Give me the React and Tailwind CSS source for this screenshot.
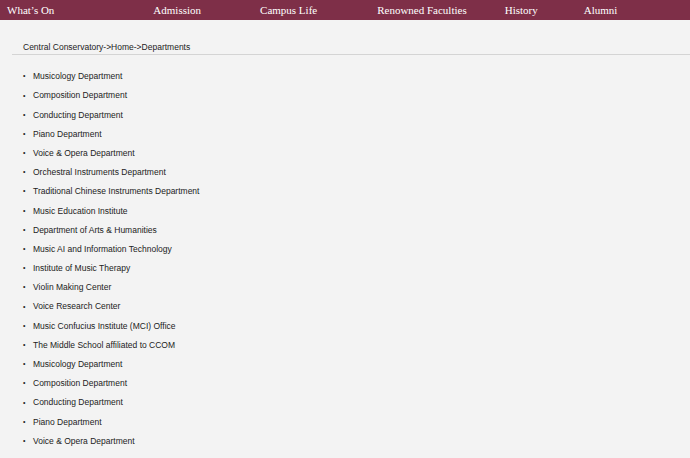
import React from 'react';

const nav = [
  ['What’s On', 'ml-[7px]'],
  ['Admission', 'ml-[99px]'],
  ['Campus Life', 'ml-[59px]'],
  ['Renowned Faculties', 'ml-[60px]'],
  ['History', 'ml-[38px]'],
  ['Alumni', 'ml-[46px]'],
];

const depts = [
  'Musicology Department',
  'Composition Department',
  'Conducting Department',
  'Piano Department',
  'Voice & Opera Department',
  'Orchestral Instruments Department',
  'Traditional Chinese Instruments Department',
  'Music Education Institute',
  'Department of Arts & Humanities',
  'Music AI and Information Technology',
  'Institute of Music Therapy',
  'Violin Making Center',
  'Voice Research Center',
  'Music Confucius Institute (MCI) Office',
  'The Middle School affiliated to CCOM',
  'Musicology Department',
  'Composition Department',
  'Conducting Department',
  'Piano Department',
  'Voice & Opera Department',
];

export default function App() {
  return (
    <div className="w-[690px] h-[458px] overflow-hidden bg-[#f3f3f3]">
      <div className="h-[20px] bg-[#7e2f48] flex items-center text-white text-[11px] font-[family-name:Liberation_Serif,serif]">
        {nav.map(([t, c]) => (
          <span key={t} className={c}>{t}</span>
        ))}
      </div>
      <div className="ml-[12px] mt-[21px] border-b border-[#d4d4d4] pl-[11px] pb-[1px] text-[8.5px] text-[#222] font-[family-name:Liberation_Sans,sans-serif] leading-[12px]">
        Central Conservatory-&gt;Home-&gt;Departments
      </div>
      <ul className="mt-[12px] font-[family-name:Liberation_Sans,sans-serif] text-[8.5px] text-[#222]">
        {depts.map((d, i) => (
          <li key={i} className="h-[19.2px] flex items-center">
            <span className="ml-[23px] w-[10px] text-[7px]">•</span>
            <span>{d}</span>
          </li>
        ))}
      </ul>
    </div>
  );
}
